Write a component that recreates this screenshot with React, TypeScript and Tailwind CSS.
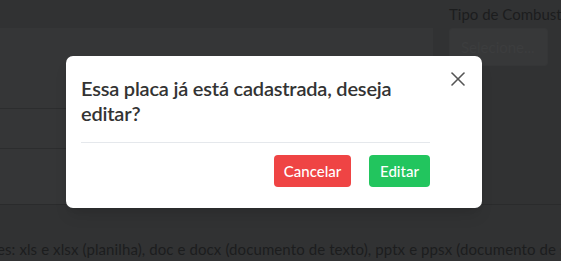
import { X, ChevronRight } from "lucide-react";

const App = () => {
    return (
        <div className="relative h-[261px] w-[561px] overflow-hidden bg-[#313233] font-['Lato',sans-serif]">
            {/* Page behind the overlay */}
            <div className="flex h-[28px] items-center pl-[449px] whitespace-nowrap text-[15px] text-[#1c1d1e]">
                Tipo de Combustível
            </div>
            <div className="flex h-[177px] border-b border-[#2a2b2c]">
                <div className="flex w-[433px] flex-col bg-[#353637]">
                    <div className="flex h-[81px] items-center justify-end border-b border-[#2c2d2e] pr-[13px] pt-[8px]">
                        <ChevronRight size={18} strokeWidth={1.5} className="text-[#2a2b2c]" />
                    </div>
                    <div className="h-[40px] border-b border-[#2c2d2e]" />
                    <div className="flex-1" />
                </div>
                <div className="flex-1 pl-[16px]">
                    <div className="flex h-[38px] w-[99px] items-center rounded-[3px] border border-[#353637] bg-[#373839] pl-[11px] text-[15px] text-[#3c3d3e]">
                        Selecione...
                    </div>
                </div>
            </div>
            <div className="mt-[33px] -ml-[3px] whitespace-nowrap text-[15px] tracking-[0.1px] text-[#1c1d1e]">
                es: xls e xlsx (planilha), doc e docx (documento de texto), pptx e ppsx (documento de slides)
            </div>

            {/* Modal */}
            <div className="absolute left-[66px] top-[56px] flex h-[152px] w-[416px] rounded-[7px] bg-white pl-[15px] pr-[16px] pt-[20px] shadow-lg">
                <div className="flex flex-1 flex-col">
                    <h2 className="text-[20px] font-semibold leading-[25px] tracking-[-0.2px] text-[#333]">
                        Essa placa já está cadastrada, deseja editar?
                    </h2>
                    <div className="mt-[16px] h-px bg-[#e5e8ec]" />
                    <div className="mt-[12px] flex justify-end gap-[18px]">
                        <button className="h-[32px] w-[77px] rounded-[4px] bg-[#ef4444] text-[15px] font-medium text-white">
                            Cancelar
                        </button>
                        <button className="h-[32px] w-[61px] rounded-[4px] bg-[#22c55e] text-[15px] font-medium text-white">
                            Editar
                        </button>
                    </div>
                </div>
                <div className="-mt-[9px] -mr-[4px] flex w-[40px] justify-end self-start">
                    <X size={24} strokeWidth={1.6} className="text-[#555]" />
                </div>
            </div>
        </div>
    );
};

export default App;
